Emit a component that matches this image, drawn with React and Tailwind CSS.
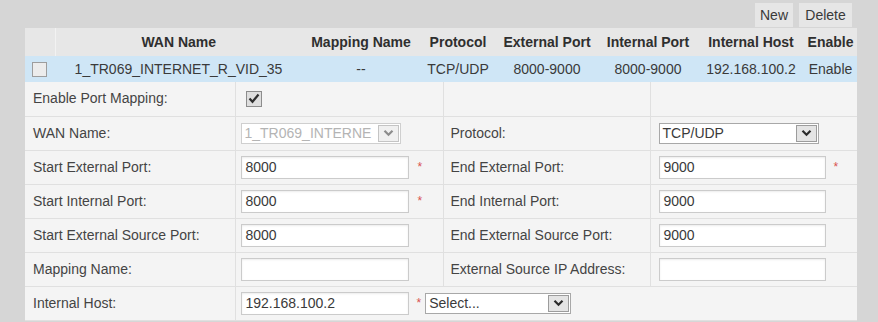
import React from "react";

const Chevron = ({ color = "#2b2b2b" }) => (
  <svg width="11" height="8" viewBox="0 0 11 8">
    <polyline points="1.5,1.8 5.5,5.8 9.5,1.8" fill="none" stroke={color} strokeWidth="2.2" />
  </svg>
);

function Select({ text, className, disabled }) {
  return (
    <div
      className={
        "flex h-[21px] items-stretch border bg-white " +
        (disabled ? "border-[#cfcfcf] " : "border-[#a8a8a8] ") +
        className
      }
    >
      <span
        className={
          "flex-1 overflow-hidden whitespace-nowrap pl-[3px] leading-[19px] " +
          (disabled ? "text-[#b4b4b4]" : "text-[#3a3a3a]")
        }
      >
        {text}
      </span>
      <span
        className={
          "m-[1px] flex w-[21px] items-center justify-center border " +
          (disabled ? "border-[#c4c4c4] bg-[#f0f0f0]" : "border-[#9c9c9c] bg-[#e4e4e4]")
        }
      >
        <Chevron color={disabled ? "#8c8c8c" : "#2b2b2b"} />
      </span>
    </div>
  );
}

function Input({ value, className }) {
  return (
    <div
      className={
        "h-[23px] overflow-hidden whitespace-nowrap border border-[#cbcbcb] bg-white pl-[4px] leading-[21px] text-[#3a3a3a] shadow-[inset_0_1px_2px_rgba(0,0,0,0.08)] " +
        className
      }
    >
      {value}
    </div>
  );
}

const Star = ({ className }) => (
  <span className={"text-[12px] leading-none text-[#d9534f] " + className}>*</span>
);

const labelCell = "border-b border-r border-[#e0e0e0] pl-[8px] text-[#444]";
const label2Cell = "border-b border-r border-[#e0e0e0] pl-[7px] text-[#444]";
const c2 = "border-b border-r border-[#e0e0e0] pl-[5px]";
const c4 = "border-b border-[#e0e0e0] pl-[8px]";

export default function App() {
  return (
    <div
      className="h-[322px] w-[878px] overflow-hidden bg-[#d6d6d6] pl-[25px] text-[14px]"
      style={{ fontFamily: '"Liberation Sans", Arial, sans-serif' }}
    >
      <div className="flex h-[28px] w-[832px] items-start justify-end gap-[6px] pr-[5px] pt-[3px]">
        <button className="h-[24px] w-[38px] bg-[#e6e6e6] text-[14px] leading-[24px] text-[#3a3a3a]">New</button>
        <button className="h-[24px] w-[53px] bg-[#e6e6e6] text-[14px] leading-[24px] text-[#3a3a3a]">Delete</button>
      </div>

      <table className="w-[832px] table-fixed border-collapse">
        <colgroup>
          <col className="w-[30px]" />
          <col className="w-[247px]" />
          <col className="w-[118px]" />
          <col className="w-[76px]" />
          <col className="w-[102px]" />
          <col className="w-[100px]" />
          <col className="w-[106px]" />
          <col className="w-[53px]" />
        </colgroup>
        <thead>
          <tr className="h-[28px] bg-[#e7e7e7] text-[#2f2f2f]">
            <th className="border-r border-[#f2f2f2] p-0"></th>
            <th className="p-0 font-bold">WAN Name</th>
            <th className="p-0 font-bold">Mapping Name</th>
            <th className="p-0 font-bold">Protocol</th>
            <th className="p-0 font-bold">External Port</th>
            <th className="p-0 font-bold">Internal Port</th>
            <th className="whitespace-nowrap p-0 font-bold">Internal Host</th>
            <th className="p-0 font-bold">Enable</th>
          </tr>
        </thead>
        <tbody>
          <tr className="h-[26px] bg-[#cfe6f6] text-center text-[#3a3a3a]">
            <td className="p-0">
              <div className="ml-[7px] h-[15px] w-[15px] border border-[#9d9d9d] bg-[#ececec]"></div>
            </td>
            <td className="p-0">1_TR069_INTERNET_R_VID_35</td>
            <td className="p-0">--</td>
            <td className="p-0">TCP/UDP</td>
            <td className="p-0">8000-9000</td>
            <td className="p-0">8000-9000</td>
            <td className="whitespace-nowrap p-0">192.168.100.2</td>
            <td className="p-0">Enable</td>
          </tr>
        </tbody>
      </table>

      <table className="w-[832px] table-fixed border-collapse bg-[#f4f4f4]">
        <colgroup>
          <col className="w-[210px]" />
          <col className="w-[208px]" />
          <col className="w-[207px]" />
          <col className="w-[207px]" />
        </colgroup>
        <tbody>
          <tr className="h-[34px]">
            <td className={labelCell}>Enable Port Mapping:</td>
            <td className={c2}>
              <div className="ml-[5px] flex h-[16px] w-[16px] items-center justify-center border border-[#8c8c8c] bg-[#dedede]">
                <svg width="12" height="11" viewBox="0 0 12 11">
                  <polyline points="1.5,5.5 4.5,8.8 10.5,1.5" fill="none" stroke="#2e2e2e" strokeWidth="2.2" />
                </svg>
              </div>
            </td>
            <td className={label2Cell}></td>
            <td className={c4}></td>
          </tr>
          <tr className="h-[34px]">
            <td className={labelCell}>WAN Name:</td>
            <td className={c2}>
              <Select text="1_TR069_INTERNE" className="w-[160px]" disabled />
            </td>
            <td className={label2Cell}>Protocol:</td>
            <td className={c4}>
              <Select text="TCP/UDP" className="w-[160px]" />
            </td>
          </tr>
          <tr className="h-[34px]">
            <td className={labelCell}>Start External Port:</td>
            <td className={c2}>
              <div className="flex items-center">
                <Input value="8000" className="w-[168px]" />
                <Star className="ml-[9px]" />
              </div>
            </td>
            <td className={label2Cell}>End External Port:</td>
            <td className={c4}>
              <div className="flex items-center">
                <Input value="9000" className="w-[167px]" />
                <Star className="ml-[8px]" />
              </div>
            </td>
          </tr>
          <tr className="h-[34px]">
            <td className={labelCell}>Start Internal Port:</td>
            <td className={c2}>
              <div className="flex items-center">
                <Input value="8000" className="w-[168px]" />
                <Star className="ml-[9px]" />
              </div>
            </td>
            <td className={label2Cell}>End Internal Port:</td>
            <td className={c4}>
              <Input value="9000" className="w-[167px]" />
            </td>
          </tr>
          <tr className="h-[34px]">
            <td className={labelCell}>Start External Source Port:</td>
            <td className={c2}>
              <Input value="8000" className="w-[168px]" />
            </td>
            <td className={label2Cell}>End External Source Port:</td>
            <td className={c4}>
              <Input value="9000" className="w-[167px]" />
            </td>
          </tr>
          <tr className="h-[34px]">
            <td className={labelCell}>Mapping Name:</td>
            <td className={c2}>
              <Input value="" className="w-[168px]" />
            </td>
            <td className={label2Cell}>External Source IP Address:</td>
            <td className={c4}>
              <Input value="" className="w-[167px]" />
            </td>
          </tr>
          <tr className="h-[34px]">
            <td className={labelCell}>Internal Host:</td>
            <td colSpan={3} className="border-b border-[#e0e0e0] pl-[5px]">
              <div className="flex items-center">
                <Input value="192.168.100.2" className="w-[168px]" />
                <Star className="ml-[8px]" />
                <Select text="Select..." className="ml-[4px] w-[146px]" />
              </div>
            </td>
          </tr>
        </tbody>
      </table>
    </div>
  );
}
